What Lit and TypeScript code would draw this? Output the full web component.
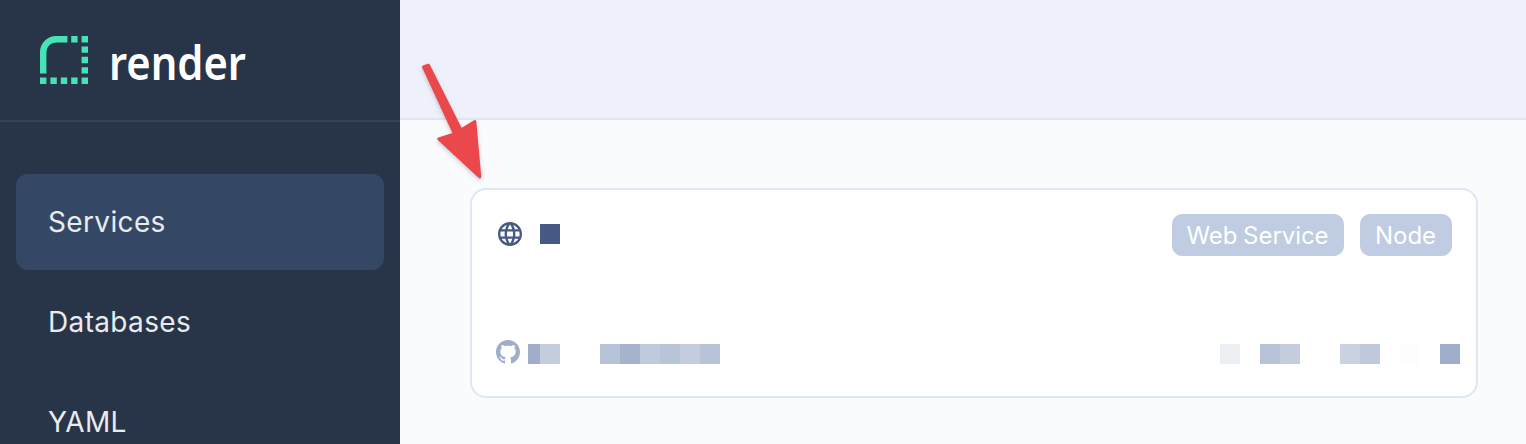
import { LitElement, html, css } from "lit";
import { customElement } from "lit/decorators.js";

type Block = [width: number, color: string];

const REPO: Block[] = [[12, "#a0aeca"], [20, "#c5ccde"], [40, "transparent"], [20, "#b7c3d7"], [20, "#a6b3cd"], [20, "#c0cadd"], [20, "#b8c4d8"], [20, "#c5ccde"], [20, "#b9c3d8"]];
const META: Block[] = [[20, "#eceff4"], [20, "transparent"], [20, "#b7c3d7"], [20, "#c5ccde"], [40, "transparent"], [20, "#cad1e0"], [20, "#c0c9dc"], [20, "transparent"], [20, "#fdfdfe"], [20, "transparent"], [20, "#9faecb"]];

@customElement("app-root")
export class AppRoot extends LitElement {
  static styles = css`
    :host { display: flex; position: relative; width: 100%; height: 444px; overflow: hidden; background: #fafbfd; font-family: Inter, "Liberation Sans", sans-serif; }
    * { box-sizing: border-box; }
    svg { display: block; flex: none; overflow: visible; }
    .sidebar { width: 400px; flex: none; background: #283548; }
    .brand { height: 122px; padding: 36px 0 0 40px; border-bottom: 2px solid #324261; }
    .wordmark { font-family: "Noto Sans", sans-serif; font-weight: 600; font-size: 47px; fill: #fff; }
    .nav { display: flex; flex-direction: column; gap: 4px; padding: 52px 16px 0; }
    .item { height: 96px; flex: none; padding-left: 32px; border-radius: 12px; line-height: 96px; font-size: 28px; letter-spacing: .35px; color: #e9ebee; }
    .active { background: #344865; }
    .main { flex: 1; min-width: 0; }
    .topbar { height: 120px; background: #eef1fa; border-bottom: 2px solid #dee6f5; }
    .card { display: flex; flex-direction: column; justify-content: space-between; height: 210px; margin: 68px 48px 0 70px; padding: 24px 16px 32px 24px; background: #fff; border: 2px solid #dfe6f5; border-radius: 16px; }
    .row { display: flex; align-items: center; }
    .lead { display: flex; align-items: center; gap: 16px; padding-bottom: 2px; }
    .name { width: 20px; height: 20px; background: #465985; }
    .tags { display: flex; gap: 16px; margin-left: auto; margin-right: 8px; }
    .tag { height: 42px; padding: 2px 1px 0 0; display: flex; align-items: center; justify-content: center; border-radius: 10px; background: #bfcce2; color: #fff; font-size: 24px; line-height: 40px; white-space: nowrap; }
    .service { width: 172px; letter-spacing: -.05px; word-spacing: -1px; }
    .runtime { width: 92px; }
    .blocks { display: flex; padding-top: 4px; }
    .block { height: 20px; }
    .repo { margin-left: 8px; }
    .meta { margin-left: auto; }
    .arrow { position: absolute; left: 410px; top: 54px; filter: drop-shadow(0 2px 2px rgba(40, 53, 72, .25)); }
  `;

  private blocks(list: Block[], cls: string) {
    return html`<div class="blocks ${cls}">${list.map(([w, c]) => html`<span class="block" style="width:${w}px;background:${c}"></span>`)}</div>`;
  }

  render() {
    return html`
      <aside class="sidebar">
        <div class="brand">
          <svg width="220" height="56" viewBox="0 0 220 56">
            <path fill="#46e3b7" d="M0 37.5V16A16 16 0 0 1 16 0H27.4V6.4H16A9.6 9.6 0 0 0 6.4 16V37.5ZM31.2 0h6.4v6.4h-6.4ZM41.6 0H48v6.4h-6.4ZM41.6 10.4H48v6.4h-6.4ZM41.6 20.8H48v6.4h-6.4ZM41.6 31.2H48v6.4h-6.4ZM0 41.6h6.4V48H0ZM10.4 41.6h6.4V48h-6.4ZM20.8 41.6h6.4V48h-6.4ZM31.2 41.6h6.4V48h-6.4ZM41.6 41.6H48V48h-6.4Z"/>
            <text class="wordmark" x="69" y="44" textLength="137" lengthAdjust="spacingAndGlyphs">render</text>
          </svg>
        </div>
        <nav class="nav">
          <div class="item active">Services</div>
          <div class="item">Databases</div>
          <div class="item">YAML</div>
        </nav>
      </aside>
      <main class="main">
        <div class="topbar"></div>
        <section class="card">
          <div class="row">
            <div class="lead">
              <svg width="28" height="24" viewBox="0 0 28 24"><path transform="translate(-.4 -2.4) scale(1.2)" fill="#465985" d="M11.99 2C6.47 2 2 6.48 2 12s4.47 10 9.99 10C17.52 22 22 17.52 22 12S17.52 2 11.99 2zm6.93 6h-2.95c-.32-1.25-.78-2.45-1.38-3.56 1.84.63 3.37 1.91 4.33 3.56zM12 4.04c.83 1.2 1.48 2.53 1.91 3.96h-3.82c.43-1.43 1.08-2.76 1.91-3.96zM4.26 14C4.1 13.36 4 12.69 4 12s.1-1.36.26-2h3.38c-.08.66-.14 1.32-.14 2 0 .68.06 1.34.14 2H4.26zm.82 2h2.95c.32 1.25.78 2.45 1.38 3.56-1.84-.63-3.37-1.9-4.33-3.56zm2.95-8H5.08c.96-1.66 2.49-2.93 4.33-3.56C8.81 5.55 8.35 6.75 8.03 8zM12 19.96c-.83-1.2-1.48-2.53-1.91-3.96h3.82c-.43 1.43-1.08 2.76-1.91 3.96zM14.34 14H9.66c-.09-.66-.16-1.32-.16-2 0-.68.07-1.35.16-2h4.68c.09.65.16 1.32.16 2 0 .68-.07 1.34-.16 2zm.25 5.56c.6-1.11 1.06-2.31 1.38-3.56h2.95c-.96 1.65-2.49 2.93-4.33 3.56zM16.36 14c.08-.66.14-1.32.14-2 0-.68-.06-1.34-.14-2h3.38c.16.64.26 1.31.26 2s-.1 1.36-.26 2h-3.38z"/></svg>
              <span class="name"></span>
            </div>
            <div class="tags"><span class="tag service">Web Service</span><span class="tag runtime">Node</span></div>
          </div>
          <div class="row">
            <svg width="24" height="24" viewBox="0 0 16 16"><path fill="#9faecb" d="M8 0C3.58 0 0 3.58 0 8c0 3.54 2.29 6.53 5.47 7.59.4.07.55-.17.55-.38 0-.19-.01-.82-.01-1.49-2.01.37-2.53-.49-2.69-.94-.09-.23-.48-.94-.82-1.13-.28-.15-.68-.52-.01-.53.63-.01 1.08.58 1.23.82.72 1.21 1.87.87 2.33.66.07-.52.28-.87.51-1.07-1.78-.2-3.64-.89-3.64-3.95 0-.87.31-1.59.82-2.15-.08-.2-.36-1.02.08-2.12 0 0 .67-.21 2.2.82.64-.18 1.32-.27 2-.27s1.36.09 2 .27c1.53-1.04 2.2-.82 2.2-.82.44 1.1.16 1.92.08 2.12.51.56.82 1.27.82 2.15 0 3.07-1.87 3.75-3.65 3.95.29.25.54.73.54 1.48 0 1.07-.01 1.93-.01 2.2 0 .21.15.46.55.38A8.01 8.01 0 0 0 16 8c0-4.42-3.58-8-8-8Z"/></svg>
            ${this.blocks(REPO, "repo")}
            ${this.blocks(META, "meta")}
          </div>
        </section>
      </main>
      <svg class="arrow" width="90" height="140" viewBox="410 54 90 140"><path fill="#eb484b" stroke="#eb484b" stroke-width="3" stroke-linejoin="round" d="M423.6 67 428.4 65.2 461 130 474.8 121.5 479.8 177 438.8 139 454.6 134Z"/></svg>
    `;
  }
}
